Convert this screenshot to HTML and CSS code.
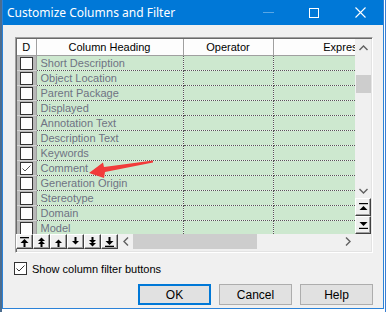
FILE: index.html
```html
<!DOCTYPE html>
<html lang="en">
<head>
    <meta charset="UTF-8">
    <meta name="viewport" content="width=device-width, initial-scale=1.0">
    <title>Customize Columns and Filter</title>
    <link rel="stylesheet" href="styles.css">
</head>
<body>
    <div class="dialog">
        <div class="titlebar">
            <span class="title">Customize Columns and Filter</span>
            <span class="tb-btn"><span class="tb-min"></span></span>
            <span class="tb-btn"><span class="tb-max"></span></span>
            <span class="tb-btn">
                <svg width="11" height="11" viewBox="0 0 11 11"><path d="M0.5 0.5 L10.5 10.5 M10.5 0.5 L0.5 10.5" stroke="#fff" stroke-width="1.1"/></svg>
            </span>
        </div>

        <div class="dialog-body">
            <div class="grid">
                <div class="grid-top">
                    <div class="viewport">
                        <table class="cols">
                            <colgroup>
                                <col class="c-d"><col class="c-head"><col class="c-op"><col class="c-expr">
                            </colgroup>
                            <thead>
                                <tr>
                                    <th>D</th>
                                    <th>Column Heading</th>
                                    <th>Operator</th>
                                    <th>Expression</th>
                                </tr>
                            </thead>
                            <tbody>
                                <tr><td class="d"><span class="box"></span></td><td>Short Description</td><td></td><td></td></tr>
                                <tr><td class="d"><span class="box"></span></td><td>Object Location</td><td></td><td></td></tr>
                                <tr><td class="d"><span class="box"></span></td><td>Parent Package</td><td></td><td></td></tr>
                                <tr><td class="d"><span class="box"></span></td><td>Displayed</td><td></td><td></td></tr>
                                <tr><td class="d"><span class="box"></span></td><td>Annotation Text</td><td></td><td></td></tr>
                                <tr><td class="d"><span class="box"></span></td><td>Description Text</td><td></td><td></td></tr>
                                <tr><td class="d"><span class="box"></span></td><td>Keywords</td><td></td><td></td></tr>
                                <tr><td class="d"><span class="box checked"><svg width="11" height="11" viewBox="0 0 11 11"><path d="M1.5 5.5 L4 8 L9.5 2.5" fill="none" stroke="#555" stroke-width="1"/></svg></span></td><td>Comment</td><td></td><td></td></tr>
                                <tr><td class="d"><span class="box"></span></td><td>Generation Origin</td><td></td><td></td></tr>
                                <tr><td class="d"><span class="box"></span></td><td>Stereotype</td><td></td><td></td></tr>
                                <tr><td class="d"><span class="box"></span></td><td>Domain</td><td></td><td></td></tr>
                                <tr><td class="d"><span class="box"></span></td><td>Model</td><td></td><td></td></tr>
                            </tbody>
                        </table>
                    </div>
                    <div class="vscroll">
                        <div class="vs-up">
                            <svg width="9" height="6" viewBox="0 0 9 6"><path d="M0.5 5 L4.5 1 L8.5 5" fill="none" stroke="#606060" stroke-width="1.4"/></svg>
                        </div>
                        <div class="vs-track"><div class="vs-thumb"></div></div>
                        <div class="vs-down">
                            <svg width="9" height="6" viewBox="0 0 9 6"><path d="M0.5 1 L4.5 5 L8.5 1" fill="none" stroke="#606060" stroke-width="1.4"/></svg>
                        </div>
                        <div class="raised vs-btn">
                            <svg width="9" height="8" viewBox="0 0 9 8"><rect x="0" y="0" width="9" height="1.2" fill="#000"/><path d="M0.5 7 L4.5 3 L8.5 7 Z" fill="#000"/></svg>
                        </div>
                        <div class="raised vs-btn">
                            <svg width="9" height="8" viewBox="0 0 9 8"><path d="M0.5 1 L4.5 5 L8.5 1 Z" fill="#000"/><rect x="0" y="6.8" width="9" height="1.2" fill="#000"/></svg>
                        </div>
                    </div>
                </div>
                <div class="grid-bottom">
                    <div class="navbtns">
                        <span class="raised nav-btn"><svg width="9" height="10" viewBox="0 0 9 10"><rect x="0" y="0" width="9" height="1.3" fill="#000"/><path d="M0.5 6 L4.5 2 L8.5 6 Z" fill="#000"/><rect x="3.5" y="5" width="2" height="5" fill="#000"/></svg></span>
                        <span class="raised nav-btn"><svg width="9" height="10" viewBox="0 0 9 10"><path d="M1 4 L4.5 0.5 L8 4 Z" fill="#000"/><path d="M1 7 L4.5 3.5 L8 7 Z" fill="#000"/><rect x="3.5" y="6" width="2" height="4" fill="#000"/></svg></span>
                        <span class="raised nav-btn"><svg width="9" height="10" viewBox="0 0 9 10"><path d="M1 6 L4.5 2.5 L8 6 Z" fill="#000"/><rect x="3.5" y="5.5" width="2" height="4.5" fill="#000"/></svg></span>
                        <span class="raised nav-btn"><svg width="9" height="10" viewBox="0 0 9 10"><rect x="3.5" y="0" width="2" height="4.5" fill="#000"/><path d="M1 4 L4.5 7.5 L8 4 Z" fill="#000"/></svg></span>
                        <span class="raised nav-btn"><svg width="9" height="10" viewBox="0 0 9 10"><rect x="3.5" y="0" width="2" height="4" fill="#000"/><path d="M1 3 L4.5 6.5 L8 3 Z" fill="#000"/><path d="M1 6 L4.5 9.5 L8 6 Z" fill="#000"/></svg></span>
                        <span class="raised nav-btn"><svg width="9" height="10" viewBox="0 0 9 10"><rect x="3.5" y="0" width="2" height="5" fill="#000"/><path d="M0.5 4 L4.5 8 L8.5 4 Z" fill="#000"/><rect x="0" y="8.7" width="9" height="1.3" fill="#000"/></svg></span>
                    </div>
                    <div class="hscroll">
                        <span class="hs-arrow">
                            <svg width="6" height="9" viewBox="0 0 6 9"><path d="M5 0.5 L1 4.5 L5 8.5" fill="none" stroke="#606060" stroke-width="1.4"/></svg>
                        </span>
                        <div class="hs-track"><div class="hs-thumb"></div></div>
                        <span class="hs-arrow">
                            <svg width="6" height="9" viewBox="0 0 6 9"><path d="M1 0.5 L5 4.5 L1 8.5" fill="none" stroke="#606060" stroke-width="1.4"/></svg>
                        </span>
                    </div>
                    <div class="corner"></div>
                </div>
            </div>

            <label class="filter-check">
                <span class="box checked">
                    <svg width="11" height="11" viewBox="0 0 11 11"><path d="M1.5 5.5 L4 8 L9.5 2.5" fill="none" stroke="#333" stroke-width="1"/></svg>
                </span>
                Show column filter buttons
            </label>

            <div class="actions">
                <button class="btn btn-default">OK</button>
                <button class="btn">Cancel</button>
                <button class="btn">Help</button>
            </div>
        </div>
    </div>

    <!-- annotation arrow drawn on top of the screenshot -->
    <svg class="annot" width="387" height="312" viewBox="0 0 387 312">
        <path d="M153 160.5 L104 167 L103 162.5 L89 173 L104 178 L105 172 L153 162.5 Z" fill="#f23b3b"/>
    </svg>
</body>
</html>
```

FILE: styles.css
```css
html, body {
    margin: 0;
    padding: 0;
}
body {
    width: 387px;
    height: 312px;
    overflow: hidden;
    position: relative;
    background: linear-gradient(90deg, #4c6d8f 0 2px, #fff 2px 385px, #3a7fd2 385px 386px, #fff 386px);
    font-family: "Liberation Sans", Arial, sans-serif;
}

.dialog {
    margin-left: 2px;
    width: 380px;
    height: 308px;
    border: 1px solid #2b82d8;
    border-top: none;
    background: #f0f0f0;
}

.titlebar {
    height: 25px;
    background: #0078d7;
    color: #fff;
    display: flex;
    align-items: center;
}
.title {
    flex: 1;
    padding-left: 4px;
    font-family: "Noto Sans", sans-serif;
    font-size: 12px;
    padding-bottom: 1px;
}
.tb-btn {
    width: 46px;
    height: 25px;
    display: flex;
    align-items: center;
    justify-content: center;
}
.tb-min {
    width: 11px;
    height: 1px;
    background: rgba(255, 255, 255, 0.35);
    margin-bottom: 1px;
}
.tb-max {
    width: 8px;
    height: 8px;
    border: 1px solid #fff;
}

.dialog-body {
    padding: 12px 10px 0 12px;
}

/* sunken list frame */
.grid {
    width: 354px;
    height: 212px;
    border: 1px solid;
    border-color: #a0a0a0 #fff #fff #a0a0a0;
    box-shadow: inset 1px 1px #696969, inset -1px -1px #e3e3e3;
    padding: 1px;
    display: flex;
    flex-direction: column;
}
.grid-top {
    display: flex;
    height: 195px;
}
.viewport {
    width: 338px;
    overflow: hidden;
    background: #f0f0f0;
}
.cols {
    table-layout: fixed;
    border-collapse: collapse;
    width: 411px;
    font-size: 11px;
}
.c-d { width: 19px; }
.c-head { width: 147px; }
.c-op { width: 90px; }
.c-expr { width: 155px; }

.cols th {
    height: 16px;
    padding: 0;
    font-weight: normal;
    color: #000;
    background: #fdfdfd;
    border-right: 1px solid #a0a0a0;
    border-bottom: 1px solid #a0a0a0;
    box-shadow: inset 1px 1px #fff;
    white-space: nowrap;
    overflow: hidden;
}
.cols td {
    height: 14px;
    padding: 0 0 0 4px;
    background: #cde8cf;
    color: #6f7383;
    border-bottom: 1px dotted #555;
    border-right: 1px dotted #555;
    white-space: nowrap;
    overflow: hidden;
    line-height: 14px;
}
.cols td.d {
    padding: 0;
    background: #b8b8b8;
    border-bottom: 1px solid #d4d4d4;
    border-right: 1px solid #a0a0a0;
}
.box {
    display: block;
    width: 11px;
    height: 11px;
    margin: 0 auto;
    background: #fff;
    border: 1px solid #333;
    position: relative;
}
.box svg {
    display: block;
}

.vscroll {
    width: 16px;
    display: flex;
    flex-direction: column;
    background: #f0f0f0;
}
.vs-up {
    height: 17px;
    display: flex;
    align-items: center;
    justify-content: center;
}
.vs-track {
    height: 127px;
    padding-top: 19px;
    box-sizing: border-box;
}
.vs-thumb {
    height: 18px;
    margin-left: 1px;
    background: #cdcdcd;
}
.vs-down {
    height: 15px;
    display: flex;
    align-items: center;
    justify-content: center;
}
.raised {
    box-sizing: border-box;
    background: #f0f0f0;
    border: 1px solid;
    border-color: #fff #404040 #404040 #fff;
    box-shadow: inset -1px -1px #a0a0a0;
    display: flex;
    align-items: center;
    justify-content: center;
}
.vs-btn {
    height: 18px;
}

.grid-bottom {
    display: flex;
    height: 15px;
}
.navbtns {
    display: flex;
    margin-left: -1px;
}
.nav-btn {
    width: 17px;
    height: 15px;
}
.hscroll {
    flex: 1;
    display: flex;
    align-items: center;
}
.hs-arrow {
    width: 15px;
    display: flex;
    justify-content: center;
}
.hs-track {
    flex: 1;
    height: 15px;
}
.hs-thumb {
    width: 124px;
    height: 15px;
    background: #cdcdcd;
}
.corner {
    width: 16px;
}

.filter-check {
    display: flex;
    align-items: center;
    margin: 9px 0 0 -1px;
    font-size: 11px;
    color: #000;
    gap: 5px;
}
.filter-check .box {
    margin: 0;
}

.actions {
    display: flex;
    justify-content: flex-end;
    gap: 8px;
    margin-top: 9px;
}
.btn {
    width: 73px;
    height: 21px;
    background: #e1e1e1;
    border: 1px solid #adadad;
    font-family: "Liberation Sans", Arial, sans-serif;
    font-size: 12px;
    color: #000;
    padding: 0;
}
.btn-default {
    border: 2px solid #0078d7;
}

.annot {
    position: absolute;
    left: 0;
    top: 0;
    pointer-events: none;
}
```
